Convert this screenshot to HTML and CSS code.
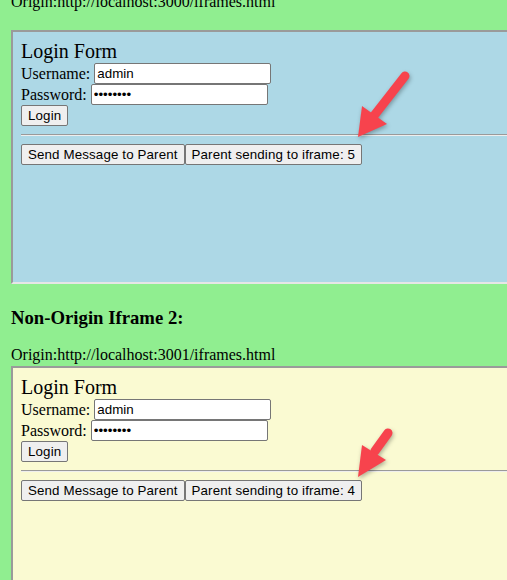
FILE: index.html
```html
<!DOCTYPE html>
<html>
<head>
<meta charset="utf-8">
<title>Iframes</title>
<link rel="stylesheet" href="styles.css">
</head>
<body>
<div class="page">
  <div class="origin origin-first">Origin:http://localhost:3000/iframes.html</div>
  <div class="frame frame-blue">
    <div class="title">Login Form</div>
    <div class="row"><label class="lbl">Username:</label><input class="field" type="text" value="admin"></div>
    <div class="row"><label class="lbl">Password:</label><input class="field" type="password" value="12345678"></div>
    <div class="row"><button class="btn">Login</button></div>
    <hr class="rule">
    <div class="row"><button class="btn">Send Message to Parent</button><button class="btn">Parent sending to iframe: 5</button></div>
  </div>
  <h3 class="heading">Non-Origin Iframe 2:</h3>
  <div class="origin origin-second">Origin:http://localhost:3001/iframes.html</div>
  <div class="frame frame-yellow">
    <div class="title">Login Form</div>
    <div class="row"><label class="lbl">Username:</label><input class="field" type="text" value="admin"></div>
    <div class="row"><label class="lbl">Password:</label><input class="field" type="password" value="12345678"></div>
    <div class="row"><button class="btn">Login</button></div>
    <hr class="rule">
    <div class="row"><button class="btn">Send Message to Parent</button><button class="btn">Parent sending to iframe: 4</button></div>
  </div>
</div>
<svg class="arrows" width="507" height="580" viewBox="0 0 507 580">
  <g class="arrow">
    <line x1="405" y1="76" x2="373" y2="117" stroke="#f7434d" stroke-width="9" stroke-linecap="round"/>
    <polygon points="358,137 362,106 387,124" fill="#f7434d"/>
  </g>
  <g class="arrow">
    <line x1="388" y1="433" x2="375" y2="451" stroke="#f7434d" stroke-width="9" stroke-linecap="round"/>
    <polygon points="358,477 362,445 386,460" fill="#f7434d"/>
  </g>
</svg>
</body>
</html>
```
FILE: styles.css
```css
html, body {
  margin: 0;
  padding: 0;
}
body {
  background: #90ee90;
  font-family: "Liberation Serif", "Times New Roman", serif;
  font-size: 16px;
  color: #000;
  overflow: hidden;
  width: 507px;
  height: 580px;
  position: relative;
}
.page {
  padding-left: 11px;
}
.origin {
  line-height: 18px;
  height: 18px;
  white-space: nowrap;
}
.origin-first {
  margin-top: -7px;
}
.origin-second {
  margin-top: 17px;
}
.frame {
  box-sizing: border-box;
  width: 520px;
  padding: 8px;
  border-top: 2px solid #9a9a9a;
  border-left: 2px solid #9a9a9a;
  border-bottom: 2px solid #e6e6e6;
  border-right: 2px solid #e6e6e6;
}
.frame-blue {
  margin-top: 19px;
  height: 254px;
  background: #add8e6;
}
.frame-yellow {
  margin-top: 2px;
  height: 214px;
  border-bottom: 0;
  background: #fafad2;
}
.title {
  font-size: 20px;
  line-height: 23px;
  height: 23px;
}
.row {
  display: flex;
  align-items: center;
  height: 21px;
  gap: 4px;
}
.row .btn + .btn {
  margin-left: -4px;
}
.lbl {
  font-size: 16px;
  line-height: 18px;
}
.field {
  box-sizing: border-box;
  width: 177px;
  height: 21px;
  margin: 0;
  padding: 1px 2px;
  border: 1px solid #767676;
  border-radius: 2px;
  background: #fff;
  font-family: "Liberation Sans", Arial, sans-serif;
  font-size: 13.333px;
  color: #000;
}
.btn {
  box-sizing: border-box;
  height: 21px;
  margin: 0;
  padding: 1px 6px;
  border: 1px solid #767676;
  border-radius: 2px;
  background: #efefef;
  font-family: "Liberation Sans", Arial, sans-serif;
  font-size: 13.333px;
  letter-spacing: 0.13px;
  color: #000;
  line-height: 15px;
}
.rule {
  margin: 8px 0;
  height: 0;
  border: 0;
  border-top: 1px solid #9a9a9a;
  border-bottom: 1px solid #eeeeee;
}
.heading {
  margin: 23px 0 0 0;
  font-size: 18.72px;
  font-weight: bold;
  line-height: 22px;
  height: 22px;
}
.arrows {
  position: absolute;
  left: 0;
  top: 0;
  pointer-events: none;
}
.arrow {
  filter: drop-shadow(1px 2px 2px rgba(0, 0, 0, 0.3));
}
```
